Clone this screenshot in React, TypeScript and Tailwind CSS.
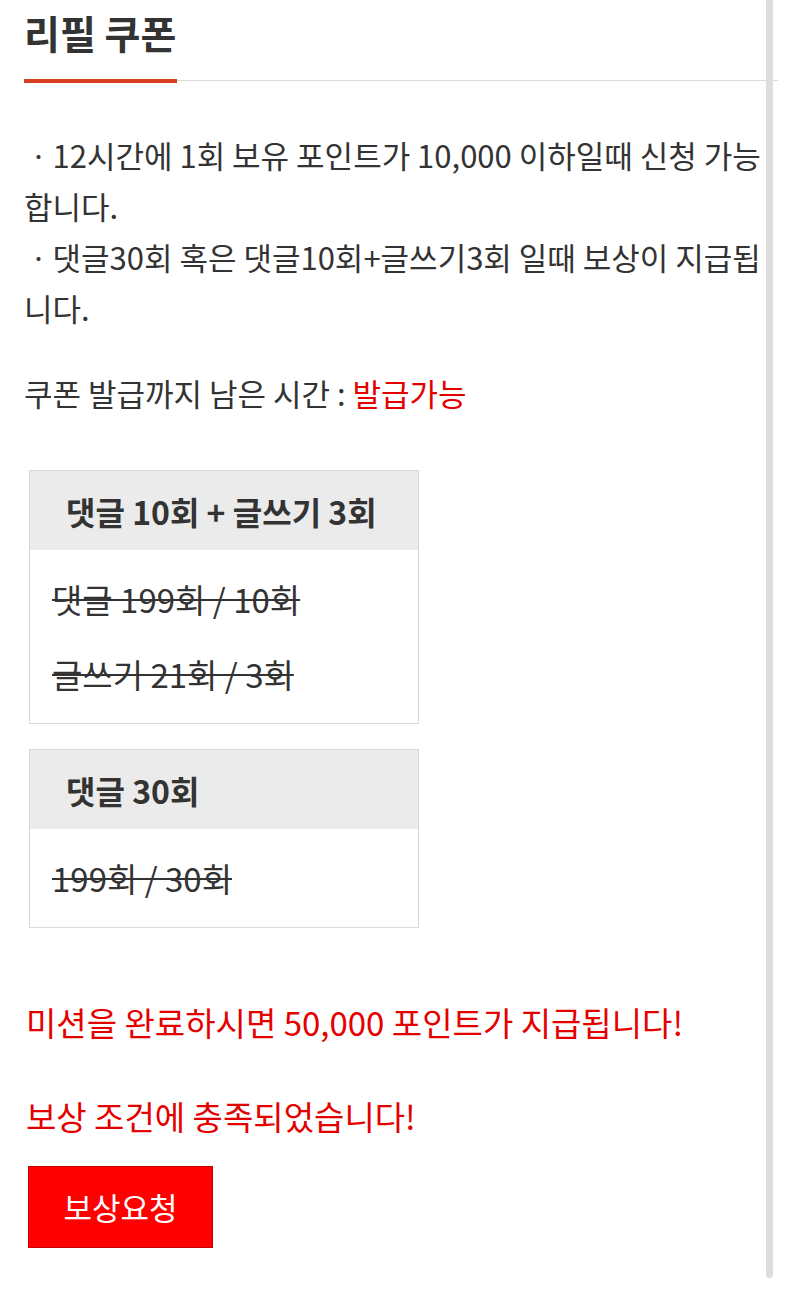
import React from "react";

const font = { fontFamily: '"Noto Sans CJK KR", "Noto Sans", sans-serif' };

function Box({ title, lines }: { title: string; lines: string[] }) {
  return (
    <div className="ml-[5px] w-[390px] border border-[#d9d9d9]">
      <div className="flex h-[79px] items-center bg-[#ebebeb] pl-[36px] text-[32px] font-bold text-[#333333]">
        {title}
      </div>
      <div className="flex flex-col gap-[25px] py-[24px] pl-[22px]">
        {lines.map((l) => (
          <div key={l} className="whitespace-nowrap text-[33px] leading-[50px] text-[#333333] line-through decoration-[2px] decoration-[#333333]">
            {l}
          </div>
        ))}
      </div>
    </div>
  );
}

export default function App() {
  return (
    <div className="relative h-[1289px] w-[800px] overflow-hidden bg-white" style={font}>
      <div className="pl-[24px]">
        <div className="mr-[22px] flex h-[81px] items-end border-b border-[#dcdcdc]">
          <div className="-mb-[3px] flex h-[84px] w-[153px] items-start border-b-[4px] border-[#d9411e] pt-[6px]">
            <span className="whitespace-nowrap text-[39px] font-bold leading-[54px] text-[#333333]">리필 쿠폰</span>
          </div>
        </div>

        <div className="mt-[48px] whitespace-nowrap text-[31px] leading-[51px] text-[#333333]">
          <div>ㆍ12시간에 1회 보유 포인트가 10,000 이하일때 신청 가능</div>
          <div>합니다.</div>
          <div>ㆍ댓글30회 혹은 댓글10회+글쓰기3회 일때 보상이 지급됩</div>
          <div>니다.</div>
        </div>

        <div className="mt-[34px] whitespace-nowrap text-[31px] leading-[51px] text-[#333333]">
          쿠폰 발급까지 남은 시간 : <span className="text-[#e50000]">발급가능</span>
        </div>

        <div className="mt-[52px] flex flex-col gap-[25px]">
          <Box title="댓글 10회 + 글쓰기 3회" lines={["댓글 199회 / 10회", "글쓰기 21회 / 3회"]} />
          <Box title="댓글 30회" lines={["199회 / 30회"]} />
        </div>

        <div className="mt-[69px] whitespace-nowrap pl-[2px] text-[33px] leading-[51px] text-[#e50000]">
          미션을 완료하시면 50,000 포인트가 지급됩니다!
        </div>
        <div className="mt-[43px] whitespace-nowrap pl-[2px] text-[33px] leading-[51px] text-[#e50000]">
          보상 조건에 충족되었습니다!
        </div>

        <button className="mt-[24px] ml-[4px] flex h-[82px] w-[185px] items-center justify-center border border-[#c40000] bg-[#ff0000] text-[31px] text-white">
          보상요청
        </button>
      </div>

      <div className="absolute left-[766px] top-0 h-[1278px] w-[7px] rounded-b-full bg-[#dddddd]" />
    </div>
  );
}
